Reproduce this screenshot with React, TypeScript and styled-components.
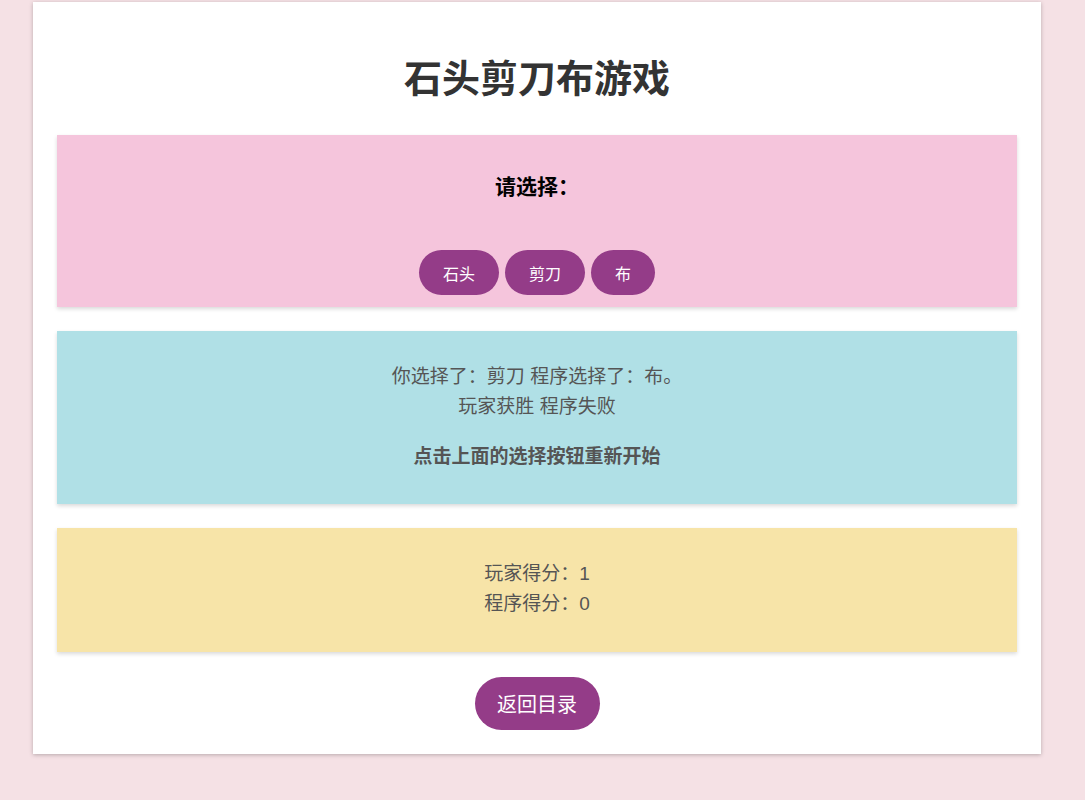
import React from "react";
import styled, { createGlobalStyle } from "styled-components";

const GlobalStyle = createGlobalStyle`
  html, body {
    margin: 0;
    padding: 0;
    background: #f5e1e5;
    font-family: "Liberation Sans", "Noto Sans CJK SC", sans-serif;
  }
`;

const Page = styled.div`
  padding: 2px 44px 40px 33px;
`;

const Card = styled.div`
  width: 1008px;
  box-sizing: border-box;
  background: #fff;
  padding: 56px 24px 24px;
  box-shadow: 0 1px 4px rgba(0, 0, 0, 0.25);
  display: flex;
  flex-direction: column;
  align-items: stretch;
`;

const Title = styled.h1`
  margin: 0 0 34px;
  font-size: 38px;
  line-height: 43px;
  font-weight: 700;
  color: #333;
  text-align: center;
`;

const Panel = styled.section<{ $bg: string; $pad: string }>`
  background: ${(p) => p.$bg};
  padding: ${(p) => p.$pad};
  margin-bottom: 24px;
  box-shadow: 0 2px 4px rgba(0, 0, 0, 0.15);
  text-align: center;
`;

const Prompt = styled.h3`
  margin: 0;
  font-size: 21px;
  line-height: 28px;
  font-weight: 700;
  color: #000;
`;

const ChoiceRow = styled.div`
  margin-top: 49px;
  display: flex;
  justify-content: center;
  gap: 6px;
`;

const PillButton = styled.button<{ $size: number; $h: number; $px: number }>`
  height: ${(p) => p.$h}px;
  padding: 0 ${(p) => p.$px}px;
  border: none;
  border-radius: ${(p) => p.$h / 2}px;
  background: #943c88;
  color: #fff;
  font-family: "Liberation Sans", "Noto Sans CJK SC", sans-serif;
  font-size: ${(p) => p.$size}px;
  cursor: pointer;
`;

const Line = styled.p<{ $bold?: boolean; $gap?: number }>`
  margin: ${(p) => p.$gap ?? 0}px 0 0;
  font-size: 19px;
  line-height: 30px;
  color: #555;
  font-weight: ${(p) => (p.$bold ? 700 : 400)};
`;

const Footer = styled.div`
  display: flex;
  justify-content: center;
  margin-top: 1px;
`;

export default function App() {
  return (
    <>
      <GlobalStyle />
      <Page>
        <Card>
          <Title>石头剪刀布游戏</Title>
          <Panel $bg="#f5c5dc" $pad="38px 20px 12px">
            <Prompt>请选择：</Prompt>
            <ChoiceRow>
              <PillButton $size={16} $h={45} $px={24}>石头</PillButton>
              <PillButton $size={16} $h={45} $px={24}>剪刀</PillButton>
              <PillButton $size={16} $h={45} $px={24}>布</PillButton>
            </ChoiceRow>
          </Panel>
          <Panel $bg="#b0e0e6" $pad="31px 20px 32px">
            <Line>你选择了：剪刀 程序选择了：布。</Line>
            <Line>玩家获胜 程序失败</Line>
            <Line $bold $gap={20}>点击上面的选择按钮重新开始</Line>
          </Panel>
          <Panel $bg="#f7e4a8" $pad="31px 20px 33px">
            <Line>玩家得分：1</Line>
            <Line>程序得分：0</Line>
          </Panel>
          <Footer>
            <PillButton $size={20} $h={53} $px={22.5}>返回目录</PillButton>
          </Footer>
        </Card>
      </Page>
    </>
  );
}
